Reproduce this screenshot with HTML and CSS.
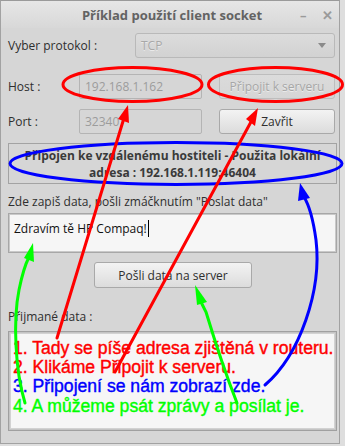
FILE: index.html
```html
<!DOCTYPE html>
<html lang="cs">
<head>
<meta charset="utf-8">
<title>Příklad použití client socket</title>
<link rel="stylesheet" href="styles.css">
</head>
<body>
<div class="window">
  <div class="titlebar">
    <span class="title">Příklad použití client socket</span>
    <span class="ctrl min">–</span>
    <span class="ctrl close">✕</span>
  </div>
  <div class="content">
    <div class="row proto">
      <span class="label">Vyber protokol :</span>
      <div class="combo"><span>TCP</span><span class="arrow"></span></div>
    </div>
    <div class="row io">
      <span class="label">Host :</span>
      <div class="field disabled">192.168.1.162</div>
      <div class="btn disabled">Připojit k serveru</div>
    </div>
    <div class="row io port">
      <span class="label">Port :</span>
      <div class="field disabled">32340</div>
      <div class="btn">Zavřit</div>
    </div>
    <div class="status">Připojen ke vzdálenému hostiteli - Použita lokální<br>adresa : 192.168.1.119:46404</div>
    <div class="caption">Zde zapiš data, pošli zmáčknutím "Poslat data"</div>
    <div class="entry">Zdravím tě HP Compaq!<span class="caret"></span></div>
    <div class="sendrow"><div class="btn send">Pošli data na server</div></div>
    <div class="caption recv-caption">Přijmané data :</div>
    <div class="received">
      <div class="inner">
        <div class="note red">1. Tady se píše adresa zjištěná v routeru.</div>
        <div class="note red">2. Klikáme Připojit k serveru.</div>
        <div class="note blue">3. Připojení se nám zobrazí zde.</div>
        <div class="note green">4. A můžeme psát zprávy a posílat je.</div>
      </div>
    </div>
  </div>
  <svg class="overlay" width="345" height="446" viewBox="0 0 345 446">
    <g fill="none" stroke-width="3" stroke-linecap="round">
      <ellipse cx="132.5" cy="84.5" rx="69.5" ry="17" stroke="#ff0000"/>
      <ellipse cx="275.5" cy="84.5" rx="67" ry="17" stroke="#ff0000"/>
      <ellipse cx="176" cy="163.5" rx="166" ry="21" stroke="#0000ff"/>
      <path d="M57,338 L124,118" stroke="#ff0000"/>
      <path d="M115,372 L252,120" stroke="#ff0000"/>
      <path d="M265,385 C300,355 322,290 316,240 C313,218 309,205 304,197" stroke="#0000ff"/>
      <path d="M25,403 C15,370 13,320 19,290 C22,275 25,265 29,257" stroke="#00ff00"/>
      <path d="M237,403 C228,380 216,345 206,312 L199,298" stroke="#00ff00"/>
    </g>
    <polygon points="128,105 129,123 118,119" fill="#ff0000"/>
    <polygon points="258,108 255,126 246,119" fill="#ff0000"/>
    <polygon points="300,183 310,198 298,201" fill="#0000ff"/>
    <polygon points="33,243 34,262 24,258" fill="#00ff00"/>
    <polygon points="195,285 207,302 197,305" fill="#00ff00"/>
  </svg>
</div>
</body>
</html>
```
FILE: styles.css
```css
* { box-sizing: border-box; }
html, body { margin: 0; padding: 0; background: #dedede; }
body { width: 345px; height: 446px; overflow: hidden; }

.window {
  position: relative;
  width: 340px;
  height: 444px;
  background: #d6d6d6;
  border: 1px solid #a2a2a2;
  border-top-color: #9a9a9a;
  font-family: "Open Sans", "Noto Sans", sans-serif;
  font-size: 12px;
  color: #2e2e2e;
}

.titlebar {
  height: 27px;
  background: linear-gradient(#e6e6e6, #d8d8d8);
  display: flex;
  align-items: center;
  justify-content: center;
  position: relative;
}
.title {
  font-weight: bold;
  font-size: 13px;
  color: #636363;
  padding-left: 4px;
}
.ctrl {
  position: absolute;
  top: 5px;
  color: #9a9a9a;
  font-weight: bold;
  font-size: 13px;
}
.ctrl.min { left: 299px; }
.ctrl.close { left: 321px; }

.content {
  padding: 5px 3px 0 7px;
  display: flex;
  flex-direction: column;
}

.row { display: flex; align-items: center; }
.label { color: #2e2e2e; }
.proto { height: 25px; }
.proto .label { width: 127px; }
.combo {
  width: 200px;
  height: 25px;
  border: 1px solid #b9b9b9;
  border-radius: 3px;
  background: linear-gradient(#dcdcdc, #d2d2d2);
  display: flex;
  align-items: center;
  justify-content: space-between;
  padding: 0 8px 0 5px;
  color: #a8a8a8;
  text-shadow: 0 1px 0 #eaeaea;
}
.arrow {
  width: 0; height: 0;
  border-left: 4px solid transparent;
  border-right: 4px solid transparent;
  border-top: 5px solid #8a8a8a;
}

.io { margin-top: 16px; height: 25px; }
.port { margin-top: 10px; }
.io .label { width: 71px; }
.field {
  width: 123px;
  height: 25px;
  border: 1px solid #b4b4b4;
  border-radius: 2px;
  padding: 0 5px;
  display: flex;
  align-items: center;
}
.field.disabled { background: #d6d6d6; color: #9c9c9c; }

.btn {
  width: 116px;
  height: 25px;
  margin-left: 17px;
  border: 1px solid #a9a9a9;
  border-radius: 3px;
  background: linear-gradient(#f3f3f3, #dcdcdc);
  display: flex;
  align-items: center;
  justify-content: center;
  color: #2e2e2e;
}
.btn.disabled {
  background: linear-gradient(#dbdbdb, #d6d6d6);
  border-color: #bdbdbd;
  color: #a6a6a6;
  text-shadow: 0 1px 0 #ececec;
}

.status {
  margin-top: 9px;
  width: 329px;
  height: 41px;
  border: 1px solid #a3a3a3;
  font-weight: bold;
  color: #3a3a3a;
  text-align: center;
  line-height: 17px;
  padding-top: 3px;
}

.caption { margin-top: 9px; height: 17px; line-height: 17px; }
.entry {
  margin-top: 3px;
  width: 329px;
  height: 40px;
  border: 1px solid #a7a7a7;
  box-shadow: inset 0 0 0 1px #c9c9c9;
  background: #f6f6f6;
  color: #111;
  padding: 6px 4px 0 5px;
  line-height: 16px;
}
.caret {
  display: inline-block;
  width: 1px;
  height: 17px;
  background: #000;
  vertical-align: -4px;
  margin-left: 1px;
}

.sendrow { margin-top: 9px; padding-left: 69px; }
.btn.send { width: 158px; height: 26px; margin-left: 17px; }

.recv-caption { margin-top: 20px; }
.received {
  margin-top: 6px;
  width: 329px;
  height: 100px;
  border: 1px solid #a0a0a0;
  background: #c4c4c4;
  padding: 1px;
}
.inner {
  height: 100%;
  background: #f6f6f6;
  border: 1px solid #d2d2d2;
  padding: 5px 0 0 2px;
}
.note {
  font-family: "Liberation Sans", Arial, sans-serif;
  font-size: 17.6px;
  line-height: 19.2px;
  -webkit-text-stroke: 0.4px currentColor;
  white-space: nowrap;
}
.red { color: #ff0000; }
.blue { color: #0000ff; }
.green { color: #00ff00; }

.overlay {
  position: absolute;
  left: -1px;
  top: -1px;
  pointer-events: none;
}
```
